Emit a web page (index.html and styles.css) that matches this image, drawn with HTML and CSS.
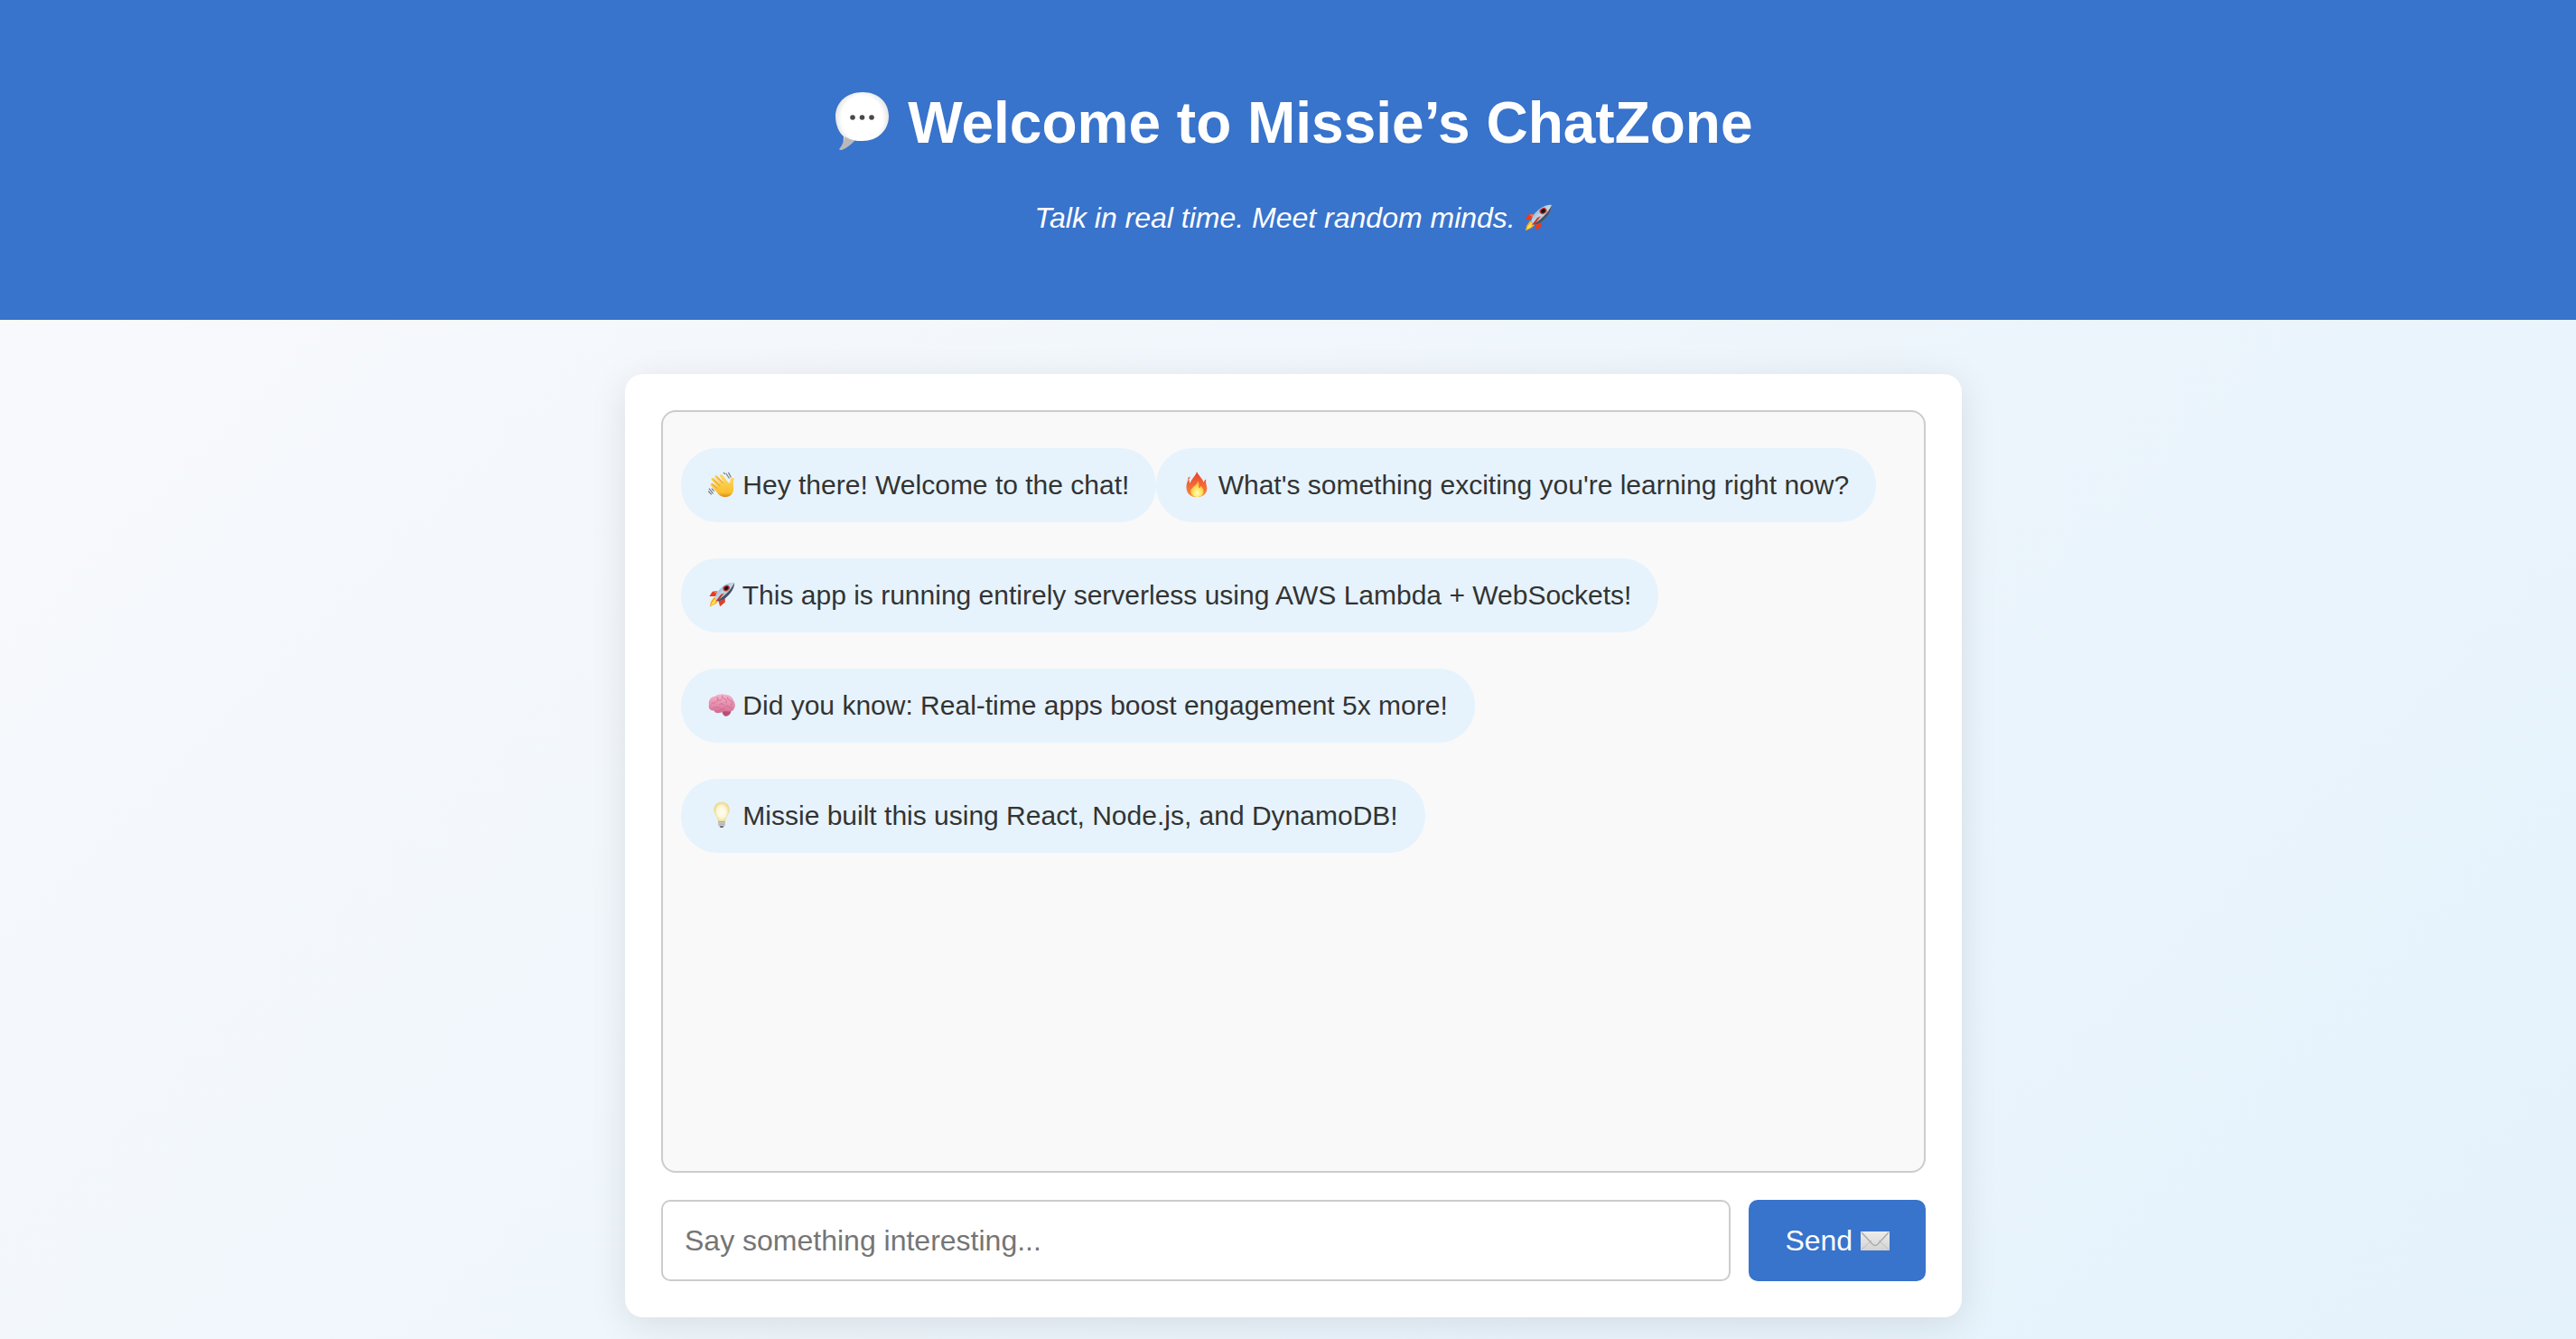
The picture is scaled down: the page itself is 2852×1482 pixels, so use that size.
FILE: index.html
```html
<!DOCTYPE html>
<html lang="en">
<head>
<meta charset="utf-8">
<meta name="viewport" content="width=device-width, initial-scale=1">
<title>Missie’s ChatZone</title>
<link rel="stylesheet" href="styles.css">
</head>
<body>
<svg class="defs" aria-hidden="true">
  <defs>
    <radialGradient id="balloon" cx=".5" cy=".45" r=".55"><stop offset=".7" stop-color="#fff"/><stop offset=".9" stop-color="#e6e6e6"/><stop offset="1" stop-color="#a8a8a8"/></radialGradient>
    <linearGradient id="body" x1="0" y1="0" x2="1" y2="1"><stop offset="0" stop-color="#5b9de0"/><stop offset=".5" stop-color="#c9d8e4"/><stop offset="1" stop-color="#3d4b5c"/></linearGradient>
    <linearGradient id="hand" x1="0" y1="0" x2="0" y2="1"><stop offset="0" stop-color="#ffd96b"/><stop offset=".8" stop-color="#fbc02f"/><stop offset="1" stop-color="#d98a1c"/></linearGradient>
    <linearGradient id="flame" x1="0" y1="0" x2="0" y2="1"><stop offset="0" stop-color="#e8432e"/><stop offset="1" stop-color="#fb8a3c"/></linearGradient>
    <radialGradient id="core" cx=".5" cy=".75" r=".6"><stop offset="0" stop-color="#fffbd0"/><stop offset=".5" stop-color="#ffe95a"/><stop offset="1" stop-color="#ffb04d"/></radialGradient>
    <linearGradient id="brain" x1="0" y1="0" x2="0" y2="1"><stop offset="0" stop-color="#f6b3cb"/><stop offset="1" stop-color="#d66f93"/></linearGradient>
    <radialGradient id="bulb" cx=".5" cy=".5" r=".5"><stop offset="0" stop-color="#fffef6"/><stop offset=".6" stop-color="#fdf7d8"/><stop offset="1" stop-color="#ecd98e"/></radialGradient>
    <linearGradient id="paper" x1="0" y1="0" x2="0" y2="1"><stop offset="0" stop-color="#ededed"/><stop offset="1" stop-color="#d2d2d2"/></linearGradient>
    <symbol id="rocket" viewBox="0 0 32 32">
      <path d="M11 12 5 12.500 1.500 18 9 18ZM20 20 20 25 14 30 12 23Z" fill="#e43d22"/>
      <path d="M6 12.500 11 12 9 15Z" fill="#f5774a"/>
      <path d="M7 19 12 24 9 27 2 30.500 3 25Z" fill="#f5a623"/>
      <path d="M8 21 11 24 7 27 3 29 5 25Z" fill="#ffe34d"/>
      <path d="M31 2C24 1 16 6 10 14L8 20 12 24 18 22C26 16 31 9 31 2Z" fill="url(#body)"/>
      <path d="M31 2C31 9 26 16 18 22L12 24 11 23C19 18 27 11 31 2Z" fill="#435265"/>
      <path d="M15 16 19 14 13 22 8 25Z" fill="#c93329"/>
      <ellipse cx="21.500" cy="8.500" rx="4.200" ry="3.300" transform="rotate(-30 21.500 8.500)" fill="#c63a32"/>
      <ellipse cx="21.500" cy="8.500" rx="2.700" ry="2.100" transform="rotate(-30 21.500 8.500)" fill="#17151c"/>
    </symbol>
  </defs>
</svg>

<header class="hero">
  <h1 class="hero-title">
    <svg class="emoji" viewBox="0 0 64 66" role="img" aria-label="Speech balloon"><path d="M32 2C49 2 61 13 61 28.500S49 56 32 56C28 56 25 56 23 55.500C19 60 13 65 8 66C6 66 6 65 7 64C10 60 11 56 11 51C6 47 2 38 2 29C2 13 15 2 32 2Z" fill="url(#balloon)"/><path d="M12 51Q17 54 23 55.500C19 60 13 65 8 66C6 66 6 65 7 64C10 60 12 56 12 51Z" fill="#b9b9b9"/><g fill="#484848"><circle cx="21" cy="30" r="2.800"/><circle cx="31.500" cy="30" r="2.800"/><circle cx="42" cy="30" r="2.800"/></g></svg>
    Welcome to Missie’s ChatZone
  </h1>
  <p class="hero-tagline">Talk in real time. Meet random minds. <svg class="emoji" role="img" aria-label="Rocket"><use href="#rocket"/></svg></p>
</header>

<main class="stage">
  <section class="chat-card">
    <div class="chat-log">
      <div class="message"><svg class="emoji" viewBox="0 0 32 32" role="img" aria-label="Waving hand"><path d="M9 24 3 17C2 15 4 14 6 15L12 20 4 11C3 9 5 7 7 9L15 16 8 8C7 6 9 4 11 6L19 14 14 7C13 5 15 3 17 5L24 14C25 15 26 14 26 12C26 9 28 8 31 9C29 13 30 17 30 21C30 28 25 31 20 31C15 31 12 28 9 24Z" fill="url(#hand)"/><path d="m6 10 8 8M10 7l8 8M5 16l6 5" fill="none" stroke="#d9952b"/><path d="m21 3 4 6M24 2l3 6M18 2l2 2M1 21l5 6M0 24l4 4M4 21l3 3" fill="none" stroke="#777" stroke-width="1.200"/></svg> Hey there! Welcome to the chat!</div>
      <div class="message"><svg class="emoji" viewBox="0 0 32 32" role="img" aria-label="Fire"><path d="M16 1C15 6 9 10 8 15C7 13 7 11 8 8C5 11 3 17 4 22C5 28 10 31 16 31S28 28 28 21C28 17 26 14 27 10C25 11 24 13 24 14C23 9 19 7 16 1ZM6 8 8 7 7 11 5 12Z" fill="url(#flame)"/><path d="M17 12C17 17 11 18 9 23C8 28 12 31 16 31C21 31 25 28 24 24C24 21 22 19 21 18C20 20 19 20 18 20C19 17 19 14 17 12Z" fill="url(#core)"/></svg> What's something exciting you're learning right now?</div>
      <div class="message"><svg class="emoji" role="img" aria-label="Rocket"><use href="#rocket"/></svg> This app is running entirely serverless using AWS Lambda + WebSockets!</div>
      <div class="message"><svg class="emoji" viewBox="0 0 32 32" role="img" aria-label="Brain"><path d="M17 23C19 22 25 21 27 23C27 27 24 30 20 29.500C17 28 16 25 17 23Z" fill="#b8506f"/><path d="M1 16C0 10 4 6 8 6C12 3 18 3 20 4C25 4 29 7 30 11C33 15 32 20 29 23C25 25 21 23 18 24C14 26 8 27 7 23C2 23 0 20 1 16Z" fill="url(#brain)"/><path d="M4 15C7 12 7 16 10 12S14 14 16 9M10 7Q13 8 11 11M17 5Q15 8 19 9T21 14M23 7Q22 10 26 11T27 17M6 21Q10 17 14 20T22 17Q26 19 28 20M13 16Q17 13 19 17M8 23Q14 24 19 21" fill="none" stroke="#cc6c8f" stroke-width=".9"/></svg> Did you know: Real-time apps boost engagement 5x more!</div>
      <div class="message"><svg class="emoji" viewBox="0 0 32 32" role="img" aria-label="Light bulb"><path d="M16 1C22 1 25 5 25 10C25 15 20 18 20 24H12C12 18 7 15 7 10C7 5 10 1 16 1Z" fill="url(#bulb)" stroke="#ead98f" stroke-width=".6"/><path d="M12 23.500H20V28Q18 31 16 31T12 28Z" fill="#aaa"/><path d="M12 25.500h8M12 28h8" stroke="#ddd"/><path d="M14 30h4" stroke="#555" stroke-width="1.500"/></svg> Missie built this using React, Node.js, and DynamoDB!</div>
    </div>
    <form class="composer">
      <input class="composer-input" type="text" placeholder="Say something interesting..." aria-label="Message">
      <button class="composer-send" type="button">Send <svg class="emoji" viewBox="0 0 32 32" role="img" aria-label="Envelope"><path d="M0 6H32V27H0Z" fill="url(#paper)"/><path d="m1 26 11-10M31 26 20 16" stroke="#bdbdbd"/><path d="m1 7 12 13q3 3 6 0L31 7" fill="none" stroke="#a8a8a8" stroke-width="1.300"/></svg></button>
    </form>
  </section>
</main>
</body>
</html>
```
FILE: styles.css
```css
* {
  box-sizing: border-box;
}

body {
  margin: 0;
  min-height: 100vh;
  font-family: "Liberation Sans", Arial, sans-serif;
  color: #333;
  background: linear-gradient(135deg, #fafafc, #e4f2fc);
}

.defs {
  position: absolute;
  width: 0;
  height: 0;
}

.emoji {
  display: inline-block;
  width: 32px;
  height: 32px;
  vertical-align: -5px;
}

.hero {
  padding: 98px 0 94px 12px;
  background: #3873cc;
  color: #fff;
  text-align: center;
}

.hero-title {
  margin: 0 0 48px;
  font-size: 64px;
  line-height: 76px;
}

.hero-title .emoji {
  width: 64px;
  height: 66px;
  vertical-align: -8px;
}

.hero-tagline {
  margin: 0;
  font-size: 32px;
  line-height: 38px;
  font-style: italic;
}

.stage {
  padding: 60px 0 24px 12px;
}

.chat-card {
  max-width: 1480px;
  margin: 0 auto;
  padding: 40px;
  border-radius: 20px;
  background: #fff;
  box-shadow: 0 8px 40px rgba(0, 0, 0, 0.1);
}

.chat-log {
  display: flex;
  flex-wrap: wrap;
  align-content: flex-start;
  row-gap: 40px;
  min-height: 844px;
  padding: 40px 20px;
  border: 2px solid #ccc;
  border-radius: 16px;
  background: #f9f9f9;
}

.message {
  padding: 24px 30px;
  border-radius: 40px;
  background: #e6f3fc;
  font-size: 30px;
  line-height: 34px;
}

.message .emoji {
  width: 30px;
  height: 30px;
  vertical-align: -4px;
}

.composer {
  display: flex;
  gap: 20px;
  margin-top: 30px;
}

.composer-input,
.composer-send {
  height: 90px;
  border-radius: 10px;
  font-family: inherit;
  font-size: 32px;
}

.composer-input {
  flex: 1;
  min-width: 0;
  padding: 0 24px;
  border: 2px solid #ccc;
  background: #fff;
}

.composer-input::placeholder {
  color: #757575;
}

.composer-send {
  padding: 0 40px;
  border: 0;
  background: #3873cc;
  color: #fff;
}
```
